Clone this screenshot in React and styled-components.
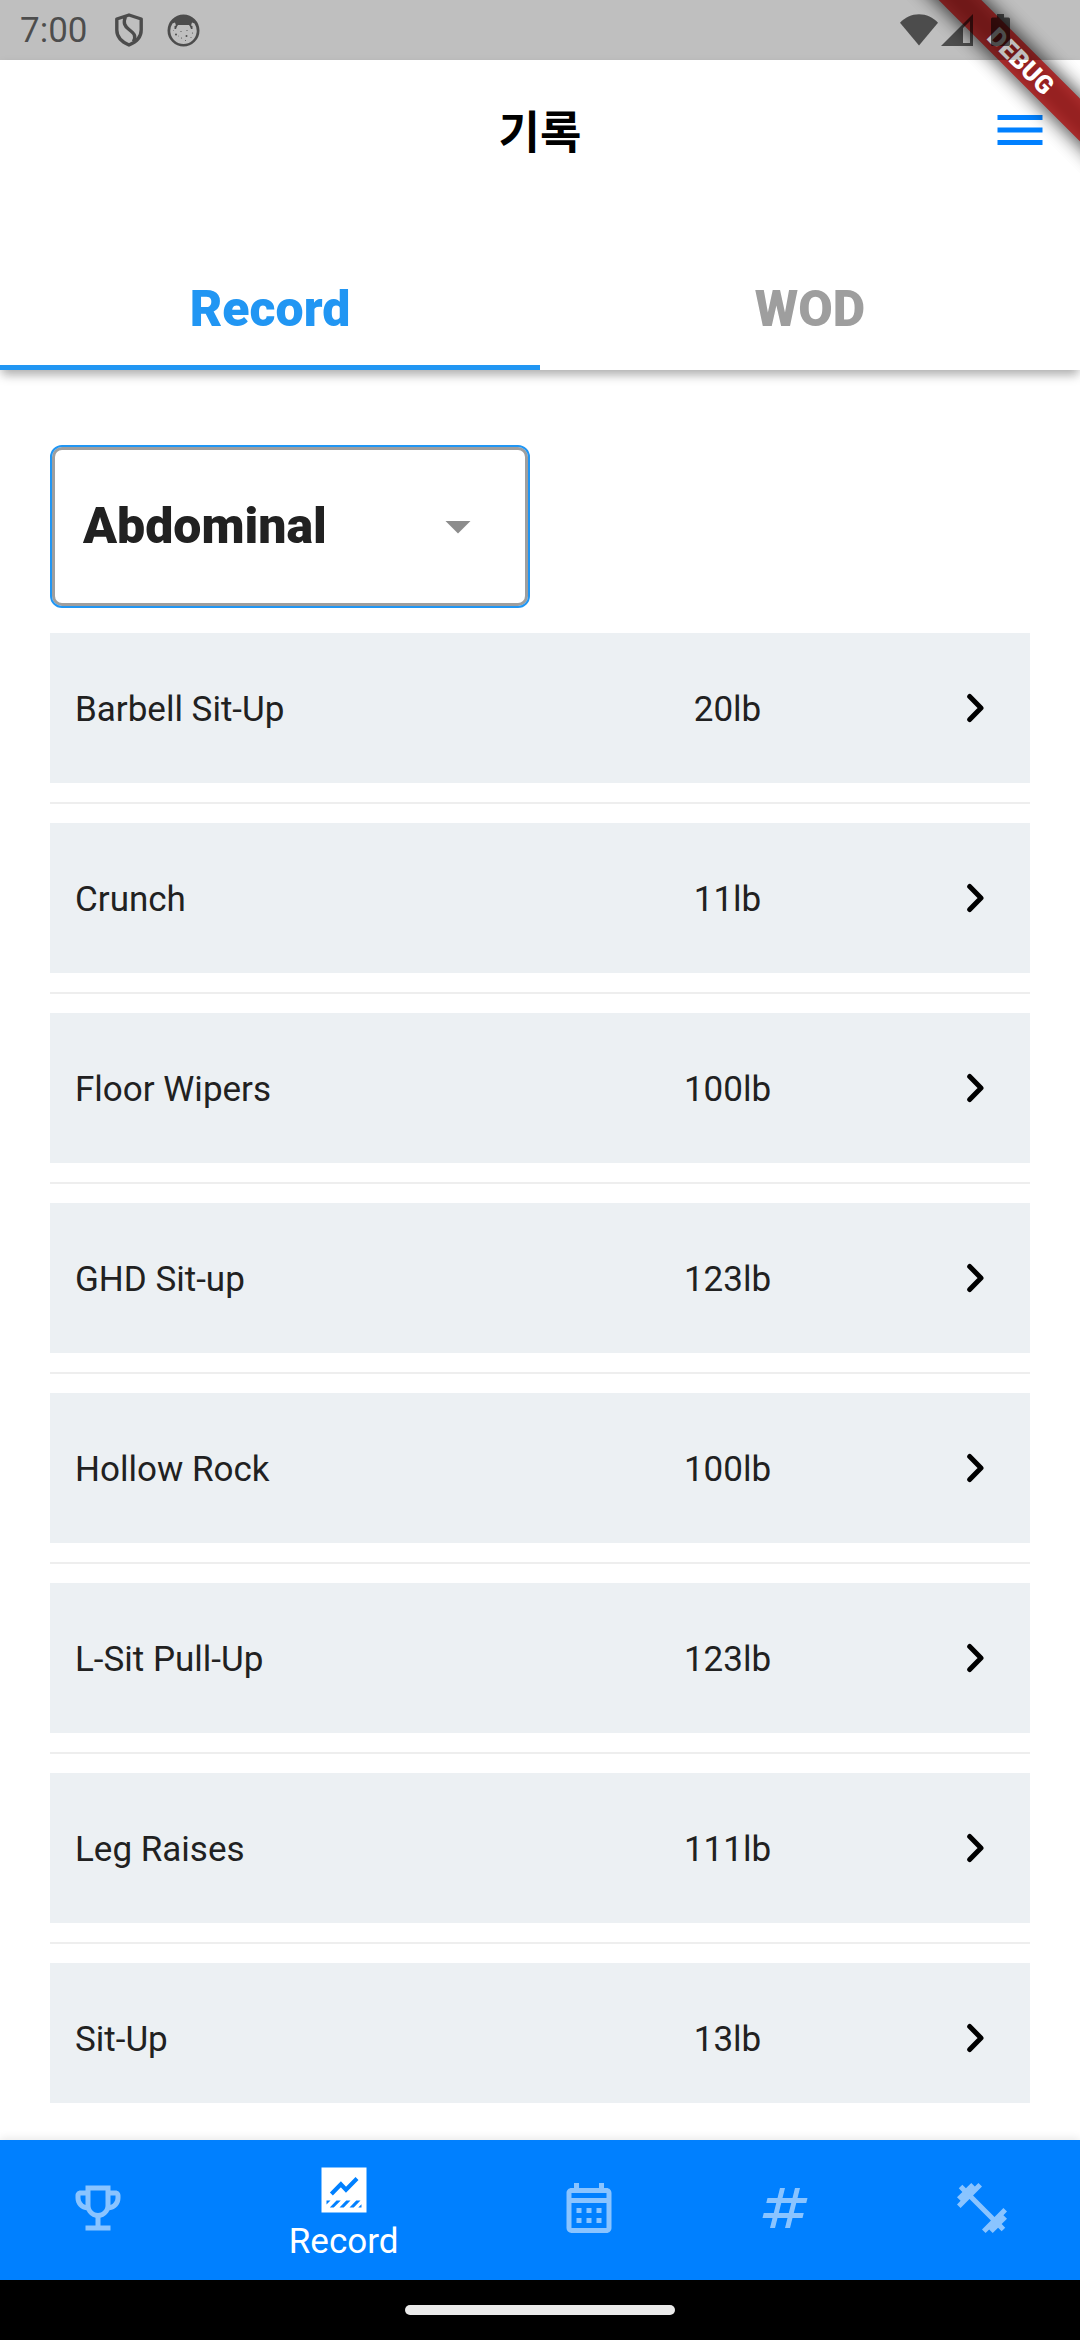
import React from "react";
import styled, { createGlobalStyle } from "styled-components";

const GlobalStyle = createGlobalStyle`
  * { box-sizing: border-box; }
  body { margin: 0; background: #fff; }
`;

const Screen = styled.div`
  position: relative;
  display: flex;
  flex-direction: column;
  width: 1080px;
  height: 2340px;
  overflow: hidden;
  background: #fff;
  color: #212121;
  font-family: Roboto, "Noto Sans CJK KR", sans-serif;
`;

const StatusBar = styled.div`
  position: relative;
  z-index: 3;
  flex: none;
  display: flex;
  align-items: center;
  justify-content: space-between;
  height: 60px;
  padding: 0 70px 0 20px;
  background: rgba(0, 0, 0, 0.25);
  color: rgba(0, 0, 0, 0.6);
`;

const StatusGroup = styled.div`
  display: flex;
  align-items: center;
  gap: ${(p) => p.$gap}px;
`;

const Clock = styled.span`
  width: 69px;
  font-size: 35px;
  line-height: 60px;
  padding-top: 1px;
`;

const Header = styled.header`
  position: relative;
  flex: none;
  height: 310px;
  background: #fff;
  box-shadow: 0 7px 10px -2px rgba(0, 0, 0, 0.27), 0 3px 9px 0 rgba(0, 0, 0, 0.08);
`;

const Toolbar = styled.div`
  display: grid;
  grid-template-columns: 90px 1fr 90px;
  align-items: center;
  height: 140px;
`;

const Title = styled.h1`
  grid-column: 2;
  margin: 0;
  padding-top: 8px;
  text-align: center;
  font-size: 45px;
  line-height: 60px;
  font-weight: 700;
  color: #000;
`;

const Tabs = styled.div`
  display: flex;
  height: 170px;
`;

const Tab = styled.div`
  flex: 1;
  display: flex;
  align-items: center;
  justify-content: center;
  padding-top: 52px;
  border-bottom: 5px solid ${(p) => (p.$active ? "#2196f3" : "transparent")};
  color: ${(p) => (p.$active ? "#2196f3" : "#9e9e9e")};
  font-size: 50px;
  font-weight: 900;
`;

const Content = styled.main`
  flex: none;
  display: flex;
  flex-direction: column;
  height: 1733px;
  padding: 75px 50px 0;
  overflow: hidden;
`;

const Select = styled.div`
  flex: none;
  display: flex;
  align-items: center;
  justify-content: space-between;
  width: 480px;
  height: 163px;
  margin-bottom: 25px;
  padding: 0 40px 2px 31px;
  border: 2px solid #2196f3;
  border-radius: 12px;
  box-shadow: inset 0 0 0 3px #9e9e9e;
  font-size: 50px;
  font-weight: 900;
`;

const List = styled.div`
  display: flex;
  flex-direction: column;
`;

const Row = styled.div`
  flex: none;
  display: grid;
  grid-template-columns: 490px 325px 1fr;
  align-items: center;
  height: 150px;
  padding-left: 25px;
  background: #ecf0f3;
  font-size: 35px;
`;

const Name = styled.span`
  padding-top: 2px;
`;

const Weight = styled.span`
  padding-top: 2px;
  text-align: center;
`;

const Arrow = styled.svg`
  display: block;
  margin-left: 71px;
`;

const Divider = styled.div`
  flex: none;
  height: 2px;
  margin: 19px 0;
  background: #eeeeee;
`;

const BottomNav = styled.nav`
  flex: none;
  display: flex;
  height: 140px;
  margin-top: 37px;
  background: #0080ff;
  box-shadow: 0 -2px 8px rgba(0, 0, 0, 0.09);
`;

const NavItem = styled.div`
  flex: ${(p) => (p.$active ? 1.5 : 1)};
  display: flex;
  flex-direction: column;
  align-items: center;
  justify-content: center;
  color: ${(p) => (p.$active ? "#fff" : "#8ac4ff")};
  padding: ${(p) => (p.$active ? "2px 0 0" : "0 0 4px")};
`;

const NavLabel = styled.span`
  height: 42px;
  margin-top: 1px;
  font-size: 35px;
  line-height: 42px;
`;

const GestureBar = styled.div`
  flex: none;
  display: flex;
  align-items: center;
  justify-content: center;
  height: 60px;
  background: #000;
`;

const Pill = styled.div`
  width: 270px;
  height: 10px;
  border-radius: 5px;
  background: #ebebeb;
`;

const Ribbon = styled.div`
  position: absolute;
  z-index: 2;
  top: 45px;
  left: 870px;
  width: 300px;
  height: 30px;
  transform: rotate(45deg);

  &::before {
    content: "";
    position: absolute;
    inset: 0;
    background: rgba(0, 0, 0, 0.5);
    filter: blur(9.9px);
  }
`;

/* The app nests two MaterialApp roots, so the banner is painted twice. */
const RibbonBase = styled(Ribbon)`
  &::after {
    content: "";
    position: absolute;
    inset: 0;
    background: rgba(183, 28, 28, 0.627);
  }
`;

const RibbonLabel = styled.div`
  position: relative;
  height: 30px;
  padding-left: 3px;
  text-align: center;
  background: rgba(183, 28, 28, 0.627);
  color: #fff;
  font-size: 25.5px;
  line-height: 30px;
  font-weight: 900;
`;

const Glyph = styled.svg`
  display: block;
  flex: none;
  width: 60px;
  height: 60px;
  fill: currentColor;
`;

const Icon = ({ d, ...rest }) => (
  <Glyph viewBox="0 0 24 24" {...rest}>
    <path d={d} />
  </Glyph>
);

const PATHS = {
  menu: "M3 18h18v-2H3v2zm0-5h18v-2H3v2zm0-7v2h18V6H3z",
  dropdown: "M7 10l5 5 5-5z",
  trophy:
    "M19 5h-2V3H7v2H5c-1.1 0-2 .9-2 2v1c0 2.55 1.92 4.63 4.39 4.94.63 1.5 1.98 2.63 3.61 2.96V19H7v2h10v-2h-4v-3.1c1.63-.33 2.98-1.46 3.61-2.96C19.08 12.63 21 10.55 21 8V7c0-1.1-.9-2-2-2zM5 8V7h2v3.82C5.84 10.4 5 9.3 5 8zm7 6c-1.65 0-3-1.35-3-3V5h6v6c0 1.65-1.35 3-3 3zm7-6c0 1.3-.84 2.4-2 2.82V7h2v1z",
  calendar:
    "M19 4h-1V2h-2v2H8V2H6v2H5c-1.11 0-1.99.9-1.99 2L3 20a2 2 0 0 0 2 2h14c1.1 0 2-.9 2-2V6c0-1.1-.9-2-2-2zm0 16H5V10h14v10zm0-12H5V6h14v2zM9 14H7v-2h2v2zm4 0h-2v-2h2v2zm4 0h-2v-2h2v2zm-8 4H7v-2h2v2zm4 0h-2v-2h2v2zm4 0h-2v-2h2v2z",
  numbers:
    "m20.5 10 .5-2h-4l1-4h-2l-1 4h-4l1-4h-2L9 8H5l-.5 2h4l-1 4h-4L3 16h4l-1 4h2l1-4h4l-1 4h2l1-4h4l.5-2h-4l1-4h4zm-7 4h-4l1-4h4l-1 4z",
  fitness:
    "M20.57 14.86 22 13.43 20.57 12 17 15.57 8.43 7 12 3.43 10.57 2 9.14 3.43 7.71 2 5.57 4.14 4.14 2.71 2.71 4.14l1.43 1.43L2 7.71l1.43 1.43L2 10.57 3.43 12 7 8.43 15.57 17 12 20.57 13.43 22l1.43-1.43L16.29 22l2.14-2.14 1.43 1.43 1.43-1.43-1.43-1.43L22 16.29l-1.43-1.43z",
};

const ChartIcon = () => (
  <Glyph viewBox="0 0 24 24">
    <rect x="3" y="3" width="18" height="18" />
    <g fill="#0080ff">
      <path d="M5 16.2h1.6L5 17.8zM6.3 19l2.7-2.8h1.7L7.9 19zM10.2 19l2.7-2.8h1.7L11.9 19zM14.2 19l2.7-2.8h1.7L15.9 19zM17.7 19l1.3-1.3V19z" />
    </g>
    <path d="M6.95 13.6l3.8-3.9 2.05 2.2 4.4-4.5" fill="none" stroke="#0080ff" strokeWidth="1.65" />
  </Glyph>
);

const ShieldIcon = () => (
  <svg width="28" height="34" viewBox="0 0 28 34" fill="none" stroke="currentColor" strokeWidth="3.4">
    <path
      d="M14 2 26.2 6v11c0 6.500-5 12-12.200 15C7 29 1.800 23.500 1.800 17V6zM10.500 3.500C8 10 9.500 13 14 16.500c5 4 7.500 6 4.500 12"
      strokeLinejoin="round"
    />
  </svg>
);

const FaceIcon = () => (
  <svg width="33" height="33" viewBox="0 0 33 33" fill="currentColor">
    <path
      fillRule="evenodd"
      d="M16.500.500a16 16 0 1 0 0 32 16 16 0 1 0 0-32zM5.500 9.500 8 8.500l1 3-1.500.5v3H9l1-2.500 1-1.500h11l1 1.500 1 2.500h1.500v-3l-1.500-.5 1-3 2.500 1A13.200 13.200 0 1 1 5.500 9.500z"
    />
    <circle cx="9" cy="20.500" r="1" />
    <circle cx="19.500" cy="22" r="1" />
    <circle cx="14" cy="17.500" r=".6" />
    <circle cx="20" cy="16.500" r=".6" />
    <circle cx="25.500" cy="19" r=".6" />
    <circle cx="14.500" cy="24" r=".6" />
    <circle cx="18.500" cy="26.500" r=".5" />
    <circle cx="24" cy="23.500" r=".5" />
    <circle cx="11.500" cy="22" r=".4" />
    <circle cx="6.500" cy="16.500" r=".4" />
  </svg>
);

const WifiIcon = () => (
  <svg width="38" height="32" viewBox="0 0 38 32" fill="currentColor">
    <path d="M19 31.500 0 8.700C5 3.500 11.500.300 19 .300S33 3.500 38 8.700z" />
  </svg>
);

const SignalIcon = () => (
  <svg width="32" height="32" viewBox="0 0 32 32" fill="currentColor" fillRule="evenodd">
    <path d="M32 0v32H0zM22 14v15h7V7z" />
  </svg>
);

const BatteryIcon = () => (
  <svg width="19" height="32" viewBox="0 0 19 32" fill="currentColor">
    <path d="M6 0h7v3.500h4.500q1.500 0 1.500 1.500v25.500q0 1.500-1.500 1.500h-16Q0 32 0 30.500V5q0-1.500 1.500-1.500H6z" />
  </svg>
);

const RECORDS = [
  ["Barbell Sit-Up", "20lb"],
  ["Crunch", "11lb"],
  ["Floor Wipers", "100lb"],
  ["GHD Sit-up", "123lb"],
  ["Hollow Rock", "100lb"],
  ["L-Sit Pull-Up", "123lb"],
  ["Leg Raises", "111lb"],
  ["Sit-Up", "13lb"],
];

const NAV = [
  { name: "trophy" },
  { name: "record", label: "Record" },
  { name: "calendar" },
  { name: "numbers" },
  { name: "fitness" },
];

export default function App() {
  return (
    <Screen>
      <GlobalStyle />
      <StatusBar>
        <StatusGroup $gap={26}>
          <Clock>7:00</Clock>
          <StatusGroup $gap={24}>
            <ShieldIcon />
            <FaceIcon />
          </StatusGroup>
        </StatusGroup>
        <StatusGroup $gap={18}>
          <StatusGroup $gap={3}>
            <WifiIcon />
            <SignalIcon />
          </StatusGroup>
          <BatteryIcon />
        </StatusGroup>
      </StatusBar>
      <RibbonBase />
      <Ribbon>
        <RibbonLabel>DEBUG</RibbonLabel>
      </Ribbon>
      <Header>
        <Toolbar>
          <Title>기록</Title>
          <Icon d={PATHS.menu} color="#0080ff" />
        </Toolbar>
        <Tabs>
          <Tab $active>Record</Tab>
          <Tab>WOD</Tab>
        </Tabs>
      </Header>
      <Content>
        <Select>
          Abdominal
          <Icon d={PATHS.dropdown} color="#8c8c8c" />
        </Select>
        <List>
          {RECORDS.map(([name, weight], i) => (
            <React.Fragment key={name}>
              {i > 0 && <Divider />}
              <Row>
                <Name>{name}</Name>
                <Weight>{weight}</Weight>
                <Arrow width="30" height="30" viewBox="0 0 30 30">
                  <path
                    d="M8.700 3.500 20 15 8.700 26.500"
                    fill="none"
                    stroke="#000"
                    strokeWidth="5"
                    strokeLinecap="round"
                    strokeLinejoin="round"
                  />
                </Arrow>
              </Row>
            </React.Fragment>
          ))}
        </List>
      </Content>
      <BottomNav>
        {NAV.map(({ name, label }) => (
          <NavItem key={name} $active={!!label}>
            {label ? <ChartIcon /> : <Icon d={PATHS[name]} />}
            {label && <NavLabel>{label}</NavLabel>}
          </NavItem>
        ))}
      </BottomNav>
      <GestureBar>
        <Pill />
      </GestureBar>
    </Screen>
  );
}
